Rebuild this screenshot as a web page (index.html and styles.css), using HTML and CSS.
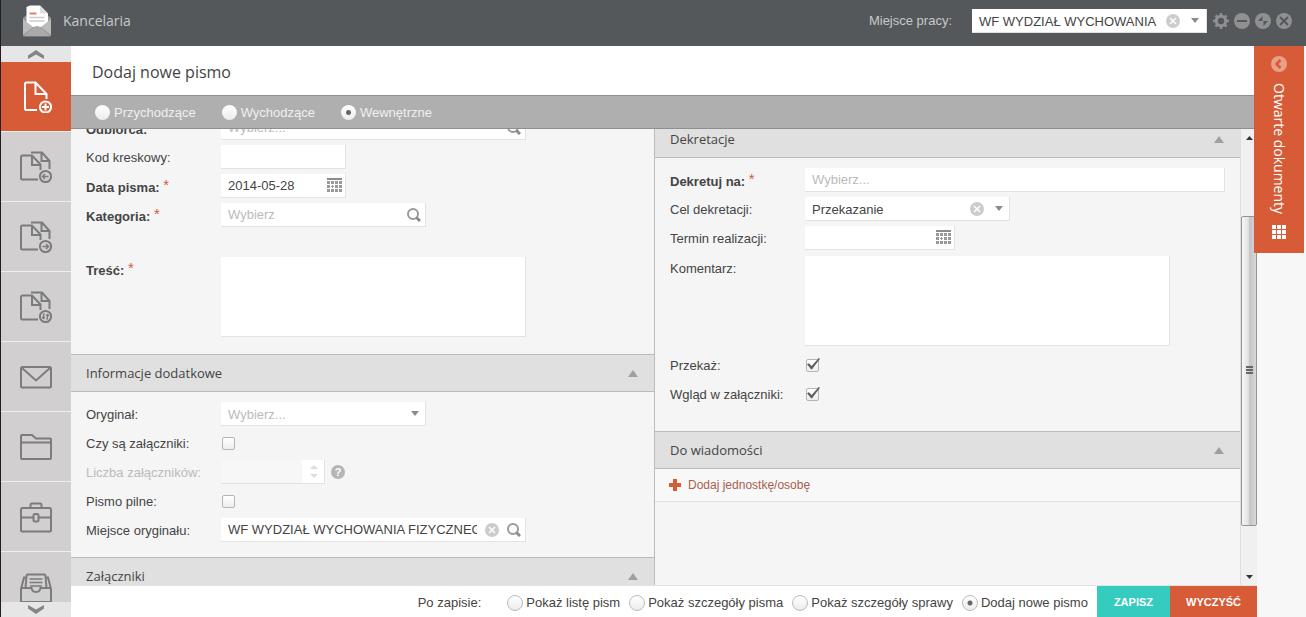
FILE: index.html
```html
<!DOCTYPE html>
<html lang="pl">
<head>
<meta charset="utf-8">
<title>Kancelaria</title>
<link rel="stylesheet" href="styles.css">
</head>
<body>
<svg class="defs" aria-hidden="true">
  <symbol id="clear" viewBox="0 0 14 14"><circle cx="7" cy="7" r="7" fill="#ccc"/><path d="M4 4l6 6M10 4l-6 6" stroke="#fff" stroke-width="1.500"/></symbol>
  <symbol id="down" viewBox="0 0 8 5"><path d="M0 0h8L4 5z" fill="#8c8c8c"/></symbol>
  <symbol id="up" viewBox="0 0 10 7"><path d="M5 0l5 7H0z" fill="#a0a0a0"/></symbol>
  <symbol id="search" viewBox="0 0 14 14"><circle cx="6" cy="6" r="5" fill="none" stroke="#999" stroke-width="2"/><path d="M9.500 9.500l3.500 3.500" stroke="#8c8c8c" stroke-width="3"/></symbol>
  <symbol id="calendar" viewBox="0 0 15 15"><path d="M0 1h15" stroke="#8c8c8c" stroke-width="2"/><path d="M0 4.500h15M0 8.500h15M0 12.500h15" stroke="#999" stroke-width="3" stroke-dasharray="3 1"/><path d="M4 8.500h3" stroke="#fff" stroke-width="3"/><path d="M4 8.500h3M5.500 7v3" stroke="#999"/></symbol>
  <symbol id="docs" viewBox="0 0 32 32"><path d="M18 28.500H2.500q-1.500 0-1.500-1.500V6q0-1.500 1.500-1.500H12l8.500 9V19M12 4.500v9.500h8.500M11 1.500h11l7.500 8.500v8M21.500 1.500V10h8"/><circle cx="25.500" cy="25.500" r="5.600"/></symbol>
</svg>
<div class="app">
  <header class="topbar">
    <svg class="logo" viewBox="0 0 30 32" aria-hidden="true"><path d="M1 13L6 9h18l5 4v17q0 1.500-1.500 1.500h-25Q1 31.500 1 30z" fill="#999"/><path d="M4.500 2L8 .500h10l8 8V22H4.500z" fill="#fff"/><path d="M18 .500v8h8z" fill="#ddd"/><path d="M7.500 8.500h7" stroke="#e27f68" stroke-width="2"/><path d="M7.500 12.500h15M7.500 16h15" stroke="#ccc" stroke-width="1.500"/><path d="M1 14l10 8L1 30zM29 14l-10 8 10 8z" fill="#bbb"/><path d="M2 31l10-9q3-2 6 0l10 9z" fill="#aaa"/></svg>
    <div class="app-name">Kancelaria</div>
    <label class="place-label" for="place">Miejsce pracy:</label>
    <div class="field place">
      <select id="place"><option>WF WYDZIAŁ WYCHOWANIA FIZYCZNEGO</option></select>
      <button class="icon-btn" aria-label="Wyczyść miejsce pracy"><svg width="14" height="14"><use href="#clear"/></svg></button>
      <svg class="arrow" width="8" height="5"><use href="#down"/></svg>
    </div>
    <div class="window-tools">
      <button class="icon-btn" aria-label="Ustawienia"><svg width="16" height="16" viewBox="0 0 16 16"><circle cx="8" cy="8" r="4.700" fill="none" stroke="#8e9092" stroke-width="3"/><path d="M8 0v3M8 13v3M0 8h3M13 8h3M2.500 2.500l2 2M11.500 11.500l2 2M13.500 2.500l-2 2M4.500 11.500l-2 2" stroke="#8e9092" stroke-width="2.500"/></svg></button>
      <button class="icon-btn" aria-label="Minimalizuj"><svg width="16" height="16" viewBox="0 0 16 16"><circle cx="8" cy="8" r="8" fill="#8e9092"/><path d="M3 8h10" stroke="#55585b" stroke-width="2"/></svg></button>
      <button class="icon-btn" aria-label="Przywróć"><svg width="16" height="16" viewBox="0 0 16 16"><circle cx="8" cy="8" r="8" fill="#8e9092"/><path d="M7.500 3v5H3zM8.500 13V8H13z" fill="#55585b"/></svg></button>
      <button class="icon-btn" aria-label="Zamknij"><svg width="16" height="16" viewBox="0 0 16 16"><circle cx="8" cy="8" r="8" fill="#8e9092"/><path d="M4 4l8 8M12 4l-8 8" stroke="#55585b" stroke-width="2"/></svg></button>
    </div>
  </header>

  <nav class="sidebar" aria-label="Menu">
    <button class="nav-scroll up" aria-label="Przewiń w górę"><svg width="16" height="9" viewBox="0 0 16 9"><path d="M0 5.500L8 0l8 5.500V9L8 4.500 0 9z" fill="#858585"/></svg></button>
    <div class="nav-items">
      <button class="nav-item active" aria-label="Dodaj pismo"><svg viewBox="0 0 32 32"><path d="M17 29H6.500Q5 29 5 27.500V3q0-1.500 1.500-1.500h9L26.500 13v5M15.500 1.500V13h11"/><circle cx="25.500" cy="26" r="5.600"/><path d="M22 26h7M25.500 22.500v7"/></svg></button>
      <button class="nav-item" aria-label="Przychodzące"><svg viewBox="0 0 32 32"><use href="#docs"/><path d="M22.500 25.500h6M25 23l-2.500 2.500L25 28" stroke-width="1.500"/></svg></button>
      <button class="nav-item" aria-label="Wychodzące"><svg viewBox="0 0 32 32"><use href="#docs"/><path d="M22.500 25.500h6M26 23l2.500 2.500L26 28" stroke-width="1.500"/></svg></button>
      <button class="nav-item" aria-label="Wewnętrzne"><svg viewBox="0 0 32 32"><use href="#docs"/><path d="M25 23h-1.500v4.500M22 26l1.500 1.700L25 26M26 28h1.500v-4.500M26 25l1.500-1.700L29 25" stroke-width="1.200"/></svg></button>
      <button class="nav-item" aria-label="Poczta"><svg viewBox="0 0 32 32"><rect x="1" y="6" width="30" height="20.500" rx="1.500"/><path d="M2 7L16 19.500 30 7"/></svg></button>
      <button class="nav-item" aria-label="Teczki"><svg viewBox="0 0 32 32"><path d="M2 4h10l4 3.500h14q1 0 1 1V27q0 1-1 1H2q-1 0-1-1V5q0-1 1-1zM1 11.500h30"/></svg></button>
      <button class="nav-item" aria-label="Sprawy"><svg viewBox="0 0 32 32"><rect x="1" y="7" width="30" height="23.500" rx="1.500"/><path d="M10.500 7V4Q10.500 2.500 12 2.500h8q1.500 0 1.500 1.500V7M1 16.500h12.500M18.500 16.500H31"/><rect x="13.500" y="13" width="5" height="7.500" rx="1.500"/></svg></button>
      <button class="nav-item" aria-label="Archiwum"><svg viewBox="0 0 32 32"><path d="M2 17h9.500q.500 4 4.500 4t4.500-4H30q1 0 1 1v12q0 1-1 1H2q-1 0-1-1V18q0-1 1-1zM1 18L4 6.500h1.500M31 18L28 6.500h-1.500M5.500 17l1-12q0-1.500 1.500-1.500h16q1.500 0 1.500 1.500l1 12"/><path d="M9.500 8h13M9.500 11.500h13M10 15h12" stroke-width="1.300"/></svg></button>
    </div>
    <button class="nav-scroll down" aria-label="Przewiń w dół"><svg width="16" height="9" viewBox="0 0 16 9"><path d="M0 3.500L8 9l8-5.500V0L8 4.500 0 0z" fill="#858585"/></svg></button>
  </nav>

  <main class="main">
    <h1 class="title">Dodaj nowe pismo</h1>
    <div class="kinds">
      <label class="radio"><input type="radio" name="kind">Przychodzące</label>
      <label class="radio"><input type="radio" name="kind">Wychodzące</label>
      <label class="radio"><input type="radio" name="kind" checked>Wewnętrzne</label>
    </div>

    <div class="content">
      <div class="col left">
        <div class="rows first">
          <div class="row"><label class="required" for="odb">Odbiorca:</label><div class="field wide"><input id="odb" placeholder="Wybierz..."><button class="icon-btn" aria-label="Szukaj odbiorcy"><svg width="14" height="14"><use href="#search"/></svg></button></div></div>
          <div class="row"><label for="kod">Kod kreskowy:</label><div class="field short"><input id="kod"></div></div>
          <div class="row"><label class="required" for="data">Data pisma: <sup>*</sup></label><div class="field short date"><input id="data" value="2014-05-28"><button class="icon-btn" aria-label="Wybierz datę pisma"><svg width="15" height="15"><use href="#calendar"/></svg></button></div></div>
          <div class="row"><label class="required" for="kat">Kategoria: <sup>*</sup></label><div class="field mid"><input id="kat" placeholder="Wybierz"><button class="icon-btn" aria-label="Szukaj kategorii"><svg width="14" height="14"><use href="#search"/></svg></button></div></div>
          <div class="row spaced"><label class="required" for="tresc">Treść: <sup>*</sup></label><textarea class="content-text" id="tresc"></textarea></div>
        </div>
        <h2 class="section">Informacje dodatkowe<svg width="10" height="7"><use href="#up"/></svg></h2>
        <div class="rows">
          <div class="row"><label for="oryg">Oryginał:</label><div class="field mid"><select id="oryg" class="empty"><option>Wybierz...</option></select><svg class="arrow" width="8" height="5"><use href="#down"/></svg></div></div>
          <div class="row"><label for="zal">Czy są załączniki:</label><input class="check" id="zal" type="checkbox"></div>
          <div class="row"><label class="muted" for="liczba">Liczba załączników:</label><div class="field number"><input id="liczba" disabled><svg class="spin" width="8" height="14" viewBox="0 0 8 14"><path d="M4 0l4 4H0zM4 13L0 9h8z" fill="#ddd"/></svg></div><button class="help" aria-label="Pomoc">?</button></div>
          <div class="row"><label for="pilne">Pismo pilne:</label><input class="check" id="pilne" type="checkbox"></div>
          <div class="row"><label for="miejsce">Miejsce oryginału:</label><div class="field wide"><input id="miejsce" value="WF WYDZIAŁ WYCHOWANIA FIZYCZNEGO"><button class="icon-btn" aria-label="Wyczyść miejsce oryginału"><svg width="14" height="14"><use href="#clear"/></svg></button><button class="icon-btn" aria-label="Szukaj miejsca oryginału"><svg width="14" height="14"><use href="#search"/></svg></button></div></div>
        </div>
        <h2 class="section">Załączniki<svg width="10" height="7"><use href="#up"/></svg></h2>
      </div>

      <div class="col right">
        <h2 class="section scrolled">Dekretacje<svg width="10" height="7"><use href="#up"/></svg></h2>
        <div class="rows assign">
          <div class="row"><label class="required" for="dek">Dekretuj na: <sup>*</sup></label><div class="field full"><input id="dek" placeholder="Wybierz..."></div></div>
          <div class="row"><label for="cel">Cel dekretacji:</label><div class="field mid"><select id="cel"><option>Przekazanie</option></select><button class="icon-btn" aria-label="Wyczyść cel"><svg width="14" height="14"><use href="#clear"/></svg></button><svg class="arrow" width="8" height="5"><use href="#down"/></svg></div></div>
          <div class="row"><label for="termin">Termin realizacji:</label><div class="field term date"><input id="termin"><button class="icon-btn" aria-label="Wybierz termin"><svg width="15" height="15"><use href="#calendar"/></svg></button></div></div>
          <div class="row comment"><label for="kom">Komentarz:</label><textarea class="comment-text" id="kom"></textarea></div>
          <div class="row"><label for="przekaz">Przekaż:</label><input class="check" id="przekaz" type="checkbox" checked></div>
          <div class="row"><label for="wglad">Wgląd w załączniki:</label><input class="check" id="wglad" type="checkbox" checked></div>
        </div>
        <h2 class="section">Do wiadomości<svg width="10" height="7"><use href="#up"/></svg></h2>
        <button class="add"><svg width="12" height="12" viewBox="0 0 12 12"><path d="M6 0v12M0 6h12" stroke="#d65b36" stroke-width="4"/></svg>Dodaj jednostkę/osobę</button>
      </div>

      <div class="scrollbar" aria-hidden="true">
        <div class="scroll-end"><svg width="7" height="4" viewBox="0 0 7 4"><path d="M3.500 0L7 4H0z" fill="#333"/></svg></div>
        <div class="track-before"></div>
        <div class="thumb"><svg width="7" height="9" viewBox="0 0 7 9"><path d="M0 1h7M0 4h7M0 7h7" stroke="#666" stroke-width="2"/></svg></div>
        <div class="track-after"></div>
        <div class="scroll-end"><svg width="7" height="4" viewBox="0 0 7 4"><path d="M3.500 4L7 0H0z" fill="#333"/></svg></div>
      </div>
    </div>

    <footer class="footer">
      <span class="after">Po zapisie:</span>
      <label class="radio"><input type="radio" name="after">Pokaż listę pism</label>
      <label class="radio"><input type="radio" name="after">Pokaż szczegóły pisma</label>
      <label class="radio"><input type="radio" name="after">Pokaż szczegóły sprawy</label>
      <label class="radio"><input type="radio" name="after" checked>Dodaj nowe pismo</label>
      <div class="actions"><button class="save">ZAPISZ</button><button class="reset">WYCZYŚĆ</button></div>
    </footer>
  </main>

  <button class="drawer">
    <svg width="16" height="16" viewBox="0 0 16 16"><circle cx="8" cy="8" r="8" fill="#e99f89"/><path d="M9.500 4L5.500 8l4 4" fill="none" stroke="#d65b36" stroke-width="2.500"/></svg>
    <span>Otwarte dokumenty</span>
    <svg width="14" height="14" viewBox="0 0 14 14"><path d="M0 2h14M0 7h14M0 12h14" stroke="#fff" stroke-width="4" stroke-dasharray="4 1"/></svg>
  </button>
</div>
</body>
</html>
```

FILE: styles.css
```css
* { box-sizing: border-box; }
body { margin: 0; font: 13px/24px "Liberation Sans", Arial, sans-serif; color: #444; }
button, input, select, textarea { font: inherit; color: inherit; margin: 0; padding: 0; border: 0; border-radius: 0; background: none; }
button { cursor: pointer; }
svg { display: block; flex: none; }
.defs { position: absolute; width: 0; height: 0; }

.app {
  position: relative;
  display: grid;
  grid-template: 46px minmax(0, 1fr) / 70px minmax(0, 1fr) 49px;
  height: 100vh;
  overflow: hidden;
  border-left: 1px solid #231f20;
  background: #f7f7f7;
}

.topbar { grid-column: 1 / -1; display: flex; align-items: center; padding: 0 14px 4px 21px; background: #55585b; color: #c6c8c9; }
.logo { width: 30px; height: 32px; }
.app-name { margin-left: 11px; font: 14px/24px "Open Sans", sans-serif; }
.place-label { margin-left: auto; }
.place { width: 235px; margin-left: 20px; color: #444; }
.window-tools { display: flex; gap: 5px; margin-left: 6px; }
.icon-btn { display: flex; flex: none; }

.field { display: flex; align-items: center; height: 24px; padding: 0 6px 0 7px; gap: 8px; background: #fff; border: solid #e2e2e2; border-width: 0 1px 1px 0; }
.field input, .field select { flex: 1; min-width: 0; height: 23px; padding-top: 1px; outline: 0; appearance: none; }
.field .arrow { margin: 0 2px 0 3px; }
::placeholder { color: #bbb; opacity: 1; }
.empty { color: #bbb; }
.wide { width: 305px; padding-right: 4px; }
.mid { width: 205px; padding-right: 4px; }
.place { padding-right: 5px; }
.short { width: 125px; }
.term { width: 150px; }
.date { padding-right: 3px; }
.full { flex: 1; }
.number { width: 104px; padding-left: 0; }
.number input { background: #f7f7f7; }
textarea { resize: none; background: #fff; border: solid #e2e2e2; border-width: 0 1px 1px 0; }
.content-text { width: 305px; height: 80px; }
.comment-text { width: 365px; height: 90px; }

.sidebar { display: flex; flex-direction: column; min-height: 0; background: #d1cfd0; }
.nav-scroll { flex: none; display: flex; justify-content: center; align-items: center; background: #e6e6e6; }
.up { height: 16px; }
.down { height: 15px; }
.nav-items { flex: 1; min-height: 0; overflow: hidden; }
.nav-item { display: flex; align-items: center; justify-content: center; width: 100%; height: 70px; border-bottom: 1px solid #efefef; }
.nav-item svg { width: 32px; height: 32px; fill: none; stroke: #7c7c7c; stroke-width: 2; }
.active { background: #d65b36; }
.nav-item.active svg { stroke: #fff; }

.main { display: flex; flex-direction: column; min-width: 0; min-height: 0; }
.title { flex: none; margin: 0; height: 49px; padding: 2px 21px 0; background: #fff; font: 16px/48px "Open Sans", sans-serif; }
.kinds { flex: none; display: flex; align-items: center; gap: 26px; height: 34px; padding-left: 24px; background: #afafaf; border: solid #8f8f8f; border-width: 1px 0; color: #f0f0f0; }
.radio { display: flex; align-items: center; gap: 3px; }
.radio input { appearance: none; width: 16px; height: 16px; border: 1px solid #bbb; border-radius: 50%; background: linear-gradient(#fff, #ececec); }
.radio input:checked { background: radial-gradient(circle, #666 0 2px, transparent 3px), linear-gradient(#fff, #ececec); }
.kinds .radio { gap: 4px; padding-top: 1px; }
.kinds .radio input { width: 15px; height: 15px; border: 0; }

.content { flex: 1; min-height: 0; display: grid; grid-template-columns: 583fr 586fr 17px; overflow: hidden; background: #f5f5f5; border-bottom: 1px solid #e2e2e2; }
.col { min-width: 0; min-height: 0; overflow: hidden; }
.right { border-left: 1px solid #bbb; }
.rows { display: flex; flex-direction: column; gap: 5px; padding: 10px 15px 15px; }
.first { margin-top: -13px; padding: 0 15px 17px; }
.assign { padding-bottom: 25px; }
.row { display: flex; }
.row > label { flex: none; width: 135px; height: 24px; padding-top: 1px; white-space: nowrap; }
.row > .required { padding-top: 2px; }
.required { font-weight: bold; }
.required sup { color: #d65b36; font-weight: normal; font-size: 15px; line-height: 0; vertical-align: 2px; }
.muted { color: #bbb; }
.spaced { margin-top: 25px; }
.comment { margin: 1px 0 2px; }
.section { display: flex; align-items: center; justify-content: space-between; height: 38px; margin: 0; padding: 0 16px 0 15px; background: #e0e0e0; border: solid #bbb; border-width: 1px 0; font: 13px/24px "Open Sans", sans-serif; }
.scrolled { margin-top: -9px; }
.check { appearance: none; width: 13px; height: 13px; margin: 6px 1px 5px; border: 1px solid #b5b5b5; border-radius: 2px; background: linear-gradient(#fff, #eee); }
.check:checked { position: relative; }
.check:checked::after { content: ""; position: absolute; left: 0; top: -2px; width: 13px; height: 12px; background: #606060; clip-path: polygon(0 52%, 14% 43%, 36% 66%, 90% 0, 100% 6%, 39% 94%, 31% 94%); }
.help { width: 14px; height: 14px; margin: 5px 6px; border-radius: 50%; background: #b5b5b5; color: #fff; font: bold 11px/14px "Liberation Sans", sans-serif; }
.add { display: flex; align-items: center; gap: 7px; width: 100%; height: 33px; padding-left: 14px; background: #f8f8f8; border-bottom: 1px solid #e0e0e0; color: #a8604e; font-size: 12px; }

.scrollbar { display: flex; flex-direction: column; background: #f0f0f0; border-left: 1px solid #ddd; }
.scroll-end { flex: none; height: 17px; display: flex; align-items: center; justify-content: center; }
.track-before { flex: 70; }
.thumb { flex: 310; display: flex; align-items: center; justify-content: center; border: 1px solid #959595; border-radius: 2px; background: linear-gradient(90deg, #f6f6f6, #e2e2e2 45%, #c4c4c8 55%, #d8d8d8); }
.track-after { flex: 42; }

.footer { flex: none; display: flex; align-items: center; justify-content: flex-end; gap: 9px; height: 31px; background: #fff; white-space: nowrap; }
.footer .radio, .after { padding-top: 2px; }
.after { margin-right: 17px; }
.actions { display: flex; align-self: stretch; }
.actions button { padding: 1px 17px 0; color: #fff; font-size: 11px; font-weight: bold; }
.save { background: #35cbbe; }
.actions .save { background: #35cbbe; }
.actions .reset { padding: 1px 16px 0; background: #d65b36; }

.drawer { position: absolute; top: 46px; right: 2px; width: 50px; padding: 10px 0 14px; display: flex; flex-direction: column; align-items: center; gap: 11px; background: #d65b36; color: #fff; font: 14px/20px "Open Sans", sans-serif; }
.drawer span { writing-mode: vertical-rl; }
```
